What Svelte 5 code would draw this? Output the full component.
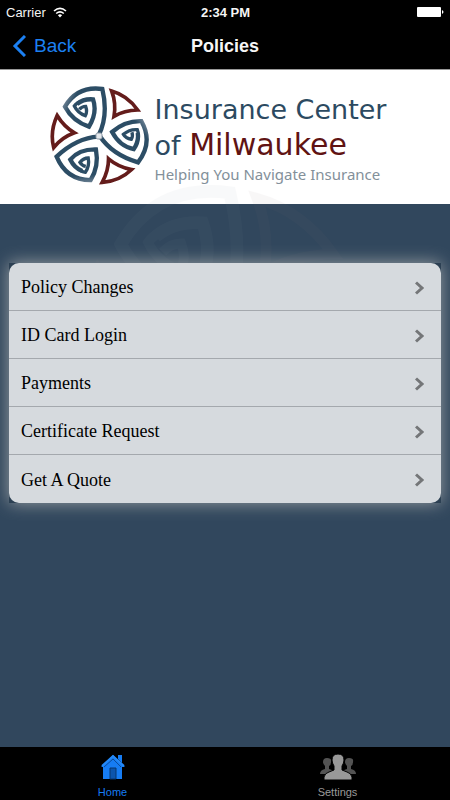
<script>
  const policies = ['Policy Changes', 'ID Card Login', 'Payments', 'Certificate Request', 'Get A Quote'];
  const turns = [0, 120, 240];
</script>

{#snippet emblem(blue, red)}
  <g fill="none">
    {#each turns as turn}
      <g transform="rotate({turn} 177 183)">
        <path stroke={blue} stroke-width="13" d="M176 181Q206 121 187 42Q112 32 75 95Q98 138 147 155Q173 112 159 73Q130 71 111 87" />
        <path stroke={blue} stroke-width="10" d="M118 81Q107 87 103 93Q113 114 136 122Q143 110 137 94Q126 94 118 103" />
        <path stroke={red} stroke-width="11" d="M215 48Q262 61 293 105Q253 106 222 124Q229 85 215 48Z" />
      </g>
    {/each}
  </g>
{/snippet}

<div class="app">
  <header class="top">
    <div class="status">
      <div class="carrier">
        <span>Carrier</span>
        <svg width="14" height="11" viewBox="0 0 14 11" aria-hidden="true">
          <g fill="none" stroke="#fff" stroke-width="1.6">
            <path d="M1 4Q7-1.4 13 4" />
            <path d="M3.2 6.5Q7 3.2 10.8 6.5" />
          </g>
          <path d="M4.9 8.2Q7 6.5 9.1 8.2L7 10.5Z" fill="#fff" />
        </svg>
      </div>
      <strong>2:34 PM</strong>
      <div class="battery">
        <svg width="28" height="12" viewBox="0 0 28 12" aria-hidden="true">
          <rect x="0" y="1" width="24" height="10" rx="1" fill="#fff" />
          <path d="M25 4Q28 6 25 8Z" fill="#fff" />
        </svg>
      </div>
    </div>
    <div class="titlebar">
      <button class="back" type="button">
        <svg width="14" height="22" viewBox="0 0 14 22" aria-hidden="true">
          <path d="M13 1L3 11L13 21" fill="none" stroke="#1c80f2" stroke-width="3" />
        </svg>
        <span>Back</span>
      </button>
      <h1>Policies</h1>
    </div>
  </header>

  <main>
    <div class="brand">
      <svg class="logo" viewBox="30 30 300 300" role="img" aria-label="Insurance Center of Milwaukee">
        <defs>
          <linearGradient id="steel" gradientUnits="userSpaceOnUse" x1="66" y1="70" x2="190" y2="130">
            <stop offset="0" stop-color="#8a99a8" />
            <stop offset="0.25" stop-color="#2c4d65" />
            <stop offset="1" stop-color="#2c4d65" />
          </linearGradient>
        </defs>
        {@render emblem('url(#steel)', '#641c1b')}
        <rect x="168" y="174" width="18" height="18" rx="5" fill="#e4e8ec" stroke="#8996a2" stroke-width="3" />
      </svg>
      <div class="name">
        <div class="line">Insurance Center</div>
        <div class="line">of <span>Milwaukee</span></div>
        <p>Helping You Navigate Insurance</p>
      </div>
    </div>
    <svg class="watermark" viewBox="30 30 300 300" aria-hidden="true">
      {@render emblem('#8b98a5', '#8a7378')}
    </svg>
    <div class="panel">
      <ul>
        {#each policies as policy}
          <li>
            <a href="#policy">
              <span>{policy}</span>
              <svg width="10" height="14" viewBox="0 0 10 14" aria-hidden="true">
                <path d="M1 1.500L7 7L1 12.500" fill="none" stroke="#747678" stroke-width="3" />
              </svg>
            </a>
          </li>
        {/each}
      </ul>
    </div>
  </main>

  <nav>
    <a class="active" href="#home">
      <svg width="26" height="26" viewBox="0 0 26 26" aria-hidden="true">
        <path d="M13 1L25 13H22V25H3V13H1Z" fill="#167cf3" />
        <path d="M18 1H22V9L18 5Z" fill="#167cf3" />
        <path d="M2 12L13 2L24 12" fill="none" stroke="#2589f7" stroke-width="2" />
        <path d="M4 13L13 5L21 13" fill="none" stroke="#0b4c9b" stroke-width="1" />
        <path d="M10 25V14H16V25Z" fill="#0c55ad" stroke="#06366f" />
      </svg>
      <span>Home</span>
    </a>
    <a href="#settings">
      <svg width="36" height="26" viewBox="0 0 36 26" aria-hidden="true">
        <g fill="#535353">
          <path d="M0 20Q0 16 5 15V12Q3 10 3 8Q3 4 7 4Q12 4 11 8Q11 11 9 12V15Q14 16 14 20Z" />
          <path d="M22 20Q22 16 27 15V12Q25 10 25 8Q25 4 29 4Q34 4 33 8Q33 11 31 12V15Q36 16 36 20Z" />
        </g>
        <path d="M4 26V23Q5 19 9 18L14 16V12Q12 9 12 6Q12 0 18 0Q24 0 24 6Q24 9 22 12V16L27 18Q31 19 32 23V26Z" fill="#999" stroke="#000" stroke-width="1" />
      </svg>
      <span>Settings</span>
    </a>
  </nav>
</div>

<style>
  :global(body) {
    margin: 0;
    background: #000;
  }

  .app {
    display: flex;
    flex-direction: column;
    min-height: 100vh;
    background: #31475d;
    font-family: "Liberation Sans", Arial, sans-serif;
  }

  .top {
    box-sizing: border-box;
    height: 70px;
    background: #000;
    border-bottom: 1px solid #999;
    color: #f5f5f5;
  }

  .status {
    display: grid;
    grid-template-columns: 1fr auto 1fr;
    align-items: center;
    height: 24px;
    padding: 0 5px 0 6px;
    font-size: 13px;
  }

  .carrier {
    display: flex;
    align-items: center;
    gap: 7px;
  }

  .battery {
    display: flex;
    justify-content: flex-end;
  }

  .titlebar {
    display: grid;
    grid-template-columns: 1fr auto 1fr;
    align-items: center;
    height: 44px;
    padding: 0 12px;
  }

  .back {
    display: flex;
    align-items: center;
    justify-self: start;
    gap: 8px;
    padding: 0;
    border: 0;
    background: none;
    color: #1c80f2;
    font-family: inherit;
    font-size: 19px;
  }

  h1 {
    margin: 0;
    font-size: 18px;
  }

  main {
    position: relative;
    flex: 1;
  }

  .brand {
    display: flex;
    justify-content: center;
    box-sizing: border-box;
    height: 134px;
    padding: 15px 14px 0 0;
    background: #fff;
  }

  .logo {
    flex: none;
    width: 100px;
    height: 100px;
  }

  .name {
    margin-left: 5px;
    padding-top: 7px;
    color: #2c4a61;
    font-family: "DejaVu Sans", Verdana, sans-serif;
    white-space: nowrap;
  }

  .line {
    font-size: 27px;
    line-height: 35px;
  }

  .line span {
    color: #601313;
    font-size: 30px;
  }

  .name p {
    margin: 0;
    color: #83909a;
    font-family: "Noto Sans", "Open Sans", sans-serif;
    font-size: 15px;
    line-height: 22px;
  }

  .watermark {
    position: absolute;
    top: 111px;
    left: calc(50% - 148px);
    width: 292px;
    height: 292px;
    opacity: 0.05;
  }

  .panel {
    position: relative;
    margin: 59px 9px 0;
    background: #2c4053;
    box-shadow: 0 0 16px rgba(210, 208, 200, 0.65);
  }

  ul {
    margin: 0;
    padding: 0;
    overflow: hidden;
    border-radius: 10px;
    background: #d6dade;
    list-style: none;
  }

  li a {
    display: flex;
    align-items: center;
    justify-content: space-between;
    box-sizing: border-box;
    height: 48px;
    padding: 2px 16px 0 12px;
    border-bottom: 1px solid #a4a8ad;
    color: #000;
    font-family: "Liberation Serif", "Times New Roman", serif;
    font-size: 18px;
    text-decoration: none;
  }

  li:last-child a {
    border-bottom: 0;
  }

  nav {
    display: flex;
    height: 53px;
    background: #000;
  }

  nav a {
    display: flex;
    flex: 1;
    flex-direction: column;
    align-items: center;
    gap: 6px;
    padding-top: 7px;
    color: #999;
    font-size: 11px;
    line-height: 13px;
    text-decoration: none;
  }

  nav .active {
    color: #167cf3;
  }
</style>
